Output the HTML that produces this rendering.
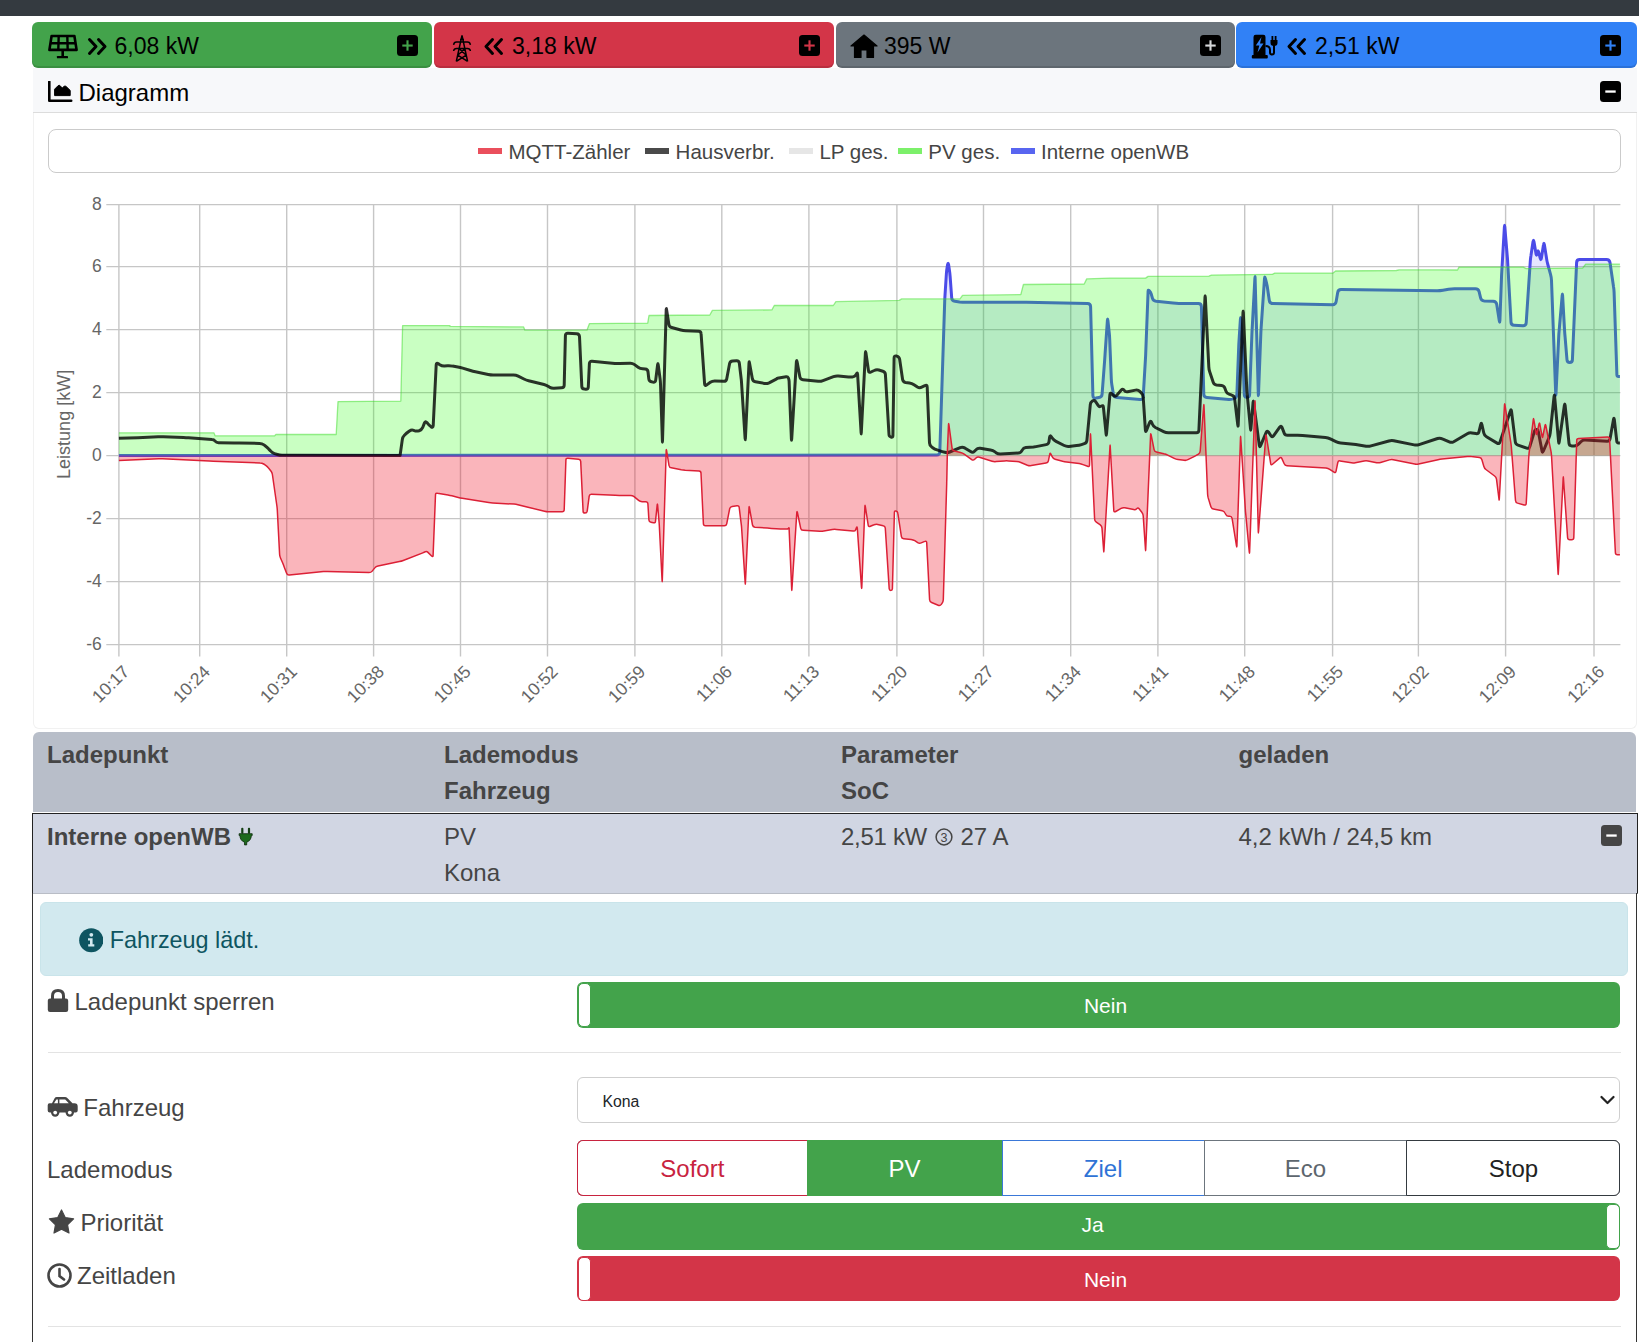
<!DOCTYPE html>
<html><head><meta charset="utf-8"><title>openWB</title>
<style>
html,body{margin:0;padding:0;background:#fff;width:1639px;height:1342px;overflow:hidden;position:relative}
body{font-family:"Liberation Sans", sans-serif}
.t{position:absolute;white-space:nowrap;line-height:1}
.b{position:absolute;display:block}
</style></head><body>
<div class="b" style="left:0.00px;top:0.00px;width:1639.00px;height:15.60px;background:#343a40"></div>
<div class="b" style="left:32.00px;top:22.00px;width:400.40px;height:45.50px;background:#43a34b;border-radius:6px;box-shadow:inset 0 -2px 0 rgba(0,0,0,.12)"></div>
<div class="b" style="left:433.60px;top:22.00px;width:400.60px;height:45.50px;background:#d33548;border-radius:6px;box-shadow:inset 0 -2px 0 rgba(0,0,0,.12)"></div>
<div class="b" style="left:835.70px;top:22.00px;width:399.80px;height:45.50px;background:#6c757d;border-radius:6px;box-shadow:inset 0 -2px 0 rgba(0,0,0,.12)"></div>
<div class="b" style="left:1236.10px;top:22.00px;width:400.60px;height:45.50px;background:#3181f6;border-radius:6px;box-shadow:inset 0 -2px 0 rgba(0,0,0,.12)"></div>
<svg class="b" style="left:397.00px;top:34.50px;" width="21" height="21" viewBox="0 0 21 21"><rect x="0" y="0" width="21" height="21" rx="3.5" fill="#000"/><rect x="5.3" y="9.5" width="10.4" height="2.1" fill="#43a34b"/><rect x="9.45" y="5.3" width="2.1" height="10.4" fill="#43a34b"/></svg>
<svg class="b" style="left:798.60px;top:34.50px;" width="21" height="21" viewBox="0 0 21 21"><rect x="0" y="0" width="21" height="21" rx="3.5" fill="#000"/><rect x="5.3" y="9.5" width="10.4" height="2.1" fill="#d33548"/><rect x="9.45" y="5.3" width="2.1" height="10.4" fill="#d33548"/></svg>
<svg class="b" style="left:1199.50px;top:34.50px;" width="21" height="21" viewBox="0 0 21 21"><rect x="0" y="0" width="21" height="21" rx="3.5" fill="#000"/><rect x="5.3" y="9.5" width="10.4" height="2.1" fill="#d6d8da"/><rect x="9.45" y="5.3" width="2.1" height="10.4" fill="#d6d8da"/></svg>
<svg class="b" style="left:1600.40px;top:34.50px;" width="21" height="21" viewBox="0 0 21 21"><rect x="0" y="0" width="21" height="21" rx="3.5" fill="#000"/><rect x="5.3" y="9.5" width="10.4" height="2.1" fill="#3181f6"/><rect x="9.45" y="5.3" width="2.1" height="10.4" fill="#3181f6"/></svg>
<svg class="b" style="left:48.00px;top:33.50px;" width="30" height="25" viewBox="0 0 30 25"><path d="M3.6 2.0 H26.4 L28.6 15.9 H1.4 Z" fill="none" stroke="#000" stroke-width="2.6" stroke-linejoin="round"/><path d="M2.3 9.2 H27.7 M10.7 2 L10.3 15.9 M19.3 2 L19.7 15.9" stroke="#000" stroke-width="2.4"/><rect x="13.4" y="16" width="2.6" height="6" fill="#000"/><rect x="8.9" y="22" width="11.1" height="2.3" rx="0.6" fill="#000"/></svg>
<svg class="b" style="left:86.50px;top:37.00px;" width="21" height="19" viewBox="0 0 21 19"><path d="M2.5 2.5 L9 9.5 L2.5 16.5 M11.5 2.5 L18 9.5 L11.5 16.5" fill="none" stroke="#000" stroke-width="3" stroke-linecap="round" stroke-linejoin="round"/></svg>
<div class="t" style="left:114.5px;top:35.33px;font-size:23px;color:#000;font-weight:normal;">6,08 kW</div>
<svg class="b" style="left:452.00px;top:34.00px;" width="20" height="28" viewBox="0 0 20 28"><path d="M10 1.3 L4.3 27.3 M10 1.3 L15.6 27.3 M1.6 10.8 Q2 8.1 4.5 8.1 H15.5 Q18 8.1 18.4 10.8 M1.6 17 Q2 14.5 4.5 14.5 H15.5 Q18 14.5 18.4 17 M8 5.5 H12 M7 14.5 L14.3 21.2 M13 14.5 L5.7 21.2 M5.7 21.2 L15.6 27.3 M14.3 21.2 L4.3 27.3" fill="none" stroke="#000" stroke-width="1.5"/></svg>
<svg class="b" style="left:482.50px;top:37.00px;" width="21" height="19" viewBox="0 0 21 19"><path d="M18.5 2.5 L12 9.5 L18.5 16.5 M9.5 2.5 L3 9.5 L9.5 16.5" fill="none" stroke="#000" stroke-width="3" stroke-linecap="round" stroke-linejoin="round"/></svg>
<div class="t" style="left:512.0px;top:35.33px;font-size:23px;color:#000;font-weight:normal;">3,18 kW</div>
<svg class="b" style="left:850.00px;top:34.00px;" width="28" height="24" viewBox="0 0 28 24"><path d="M14 1 L27 12 L23.5 12 L23.5 23.5 L17 23.5 L17 16 L11 16 L11 23.5 L4.5 23.5 L4.5 12 L1 12 Z" fill="#000" stroke="#000" stroke-width="1.2" stroke-linejoin="round"/></svg>
<div class="t" style="left:884.0px;top:35.33px;font-size:23px;color:#000;font-weight:normal;">395 W</div>
<svg class="b" style="left:1251.00px;top:33.50px;" width="28" height="25" viewBox="0 0 28 25"><path d="M2.5 3 Q2.5 0.8 4.7 0.8 H12.3 Q14.5 0.8 14.5 3 V21.5 H2.5 Z" fill="#000"/><rect x="0.8" y="21" width="16" height="3.6" rx="1" fill="#000"/><path d="M10.5 3 L4.8 11.5 H8.3 L6.5 18.5 L12.5 9.5 H9 Z" fill="#3181f6"/><path d="M14.5 12 Q19 12 19 16 V18.5 Q19 20.5 21 20.5 Q23 20.5 23 18.5 V11" fill="none" stroke="#000" stroke-width="2"/><path d="M19.5 6 H26.5 V9 Q26.5 12 23 12 Q19.5 12 19.5 9 Z" fill="#000"/><rect x="20.5" y="2" width="1.8" height="5" fill="#000"/><rect x="23.7" y="2" width="1.8" height="5" fill="#000"/></svg>
<svg class="b" style="left:1286.00px;top:37.00px;" width="21" height="19" viewBox="0 0 21 19"><path d="M18.5 2.5 L12 9.5 L18.5 16.5 M9.5 2.5 L3 9.5 L9.5 16.5" fill="none" stroke="#000" stroke-width="3" stroke-linecap="round" stroke-linejoin="round"/></svg>
<div class="t" style="left:1315.0px;top:35.33px;font-size:23px;color:#000;font-weight:normal;">2,51 kW</div>
<div class="b" style="left:32.50px;top:67.50px;width:1604.00px;height:661.50px;border:1px solid #f1f1f1;border-top:none;border-radius:0 0 6px 6px;background:#fff;box-sizing:border-box"></div>
<div class="b" style="left:32.50px;top:67.50px;width:1604.00px;height:45.50px;background:#f7f8fa;border-bottom:1px solid #dcdcdc;box-sizing:border-box"></div>
<svg class="b" style="left:47.50px;top:81.00px;" width="25" height="22" viewBox="0 0 25 22"><path d="M1.3 0.8 V19.7 H23.2" fill="none" stroke="#000" stroke-width="2.6" stroke-linecap="round" stroke-linejoin="round"/><path d="M6.6 14.6 V8.2 L10.2 4.6 Q11.2 3.8 12.2 4.8 L14.2 7.0 L16.2 5.3 Q17.2 4.6 18.2 5.6 L22.2 9.4 V14.6 Z" fill="#000" stroke="#000" stroke-width="1" stroke-linejoin="round"/></svg>
<div class="t" style="left:78.5px;top:80.98px;font-size:24px;color:#000;font-weight:normal;">Diagramm</div>
<svg class="b" style="left:1600.40px;top:80.50px;" width="21" height="21" viewBox="0 0 21 21"><rect x="0" y="0" width="21" height="21" rx="3.5" fill="#000"/><rect x="5.3" y="9.4" width="10.4" height="2.3" fill="#fff"/></svg>
<div class="b" style="left:48.00px;top:129.30px;width:1572.50px;height:44.20px;border:1px solid #cbcbcb;border-radius:8px;box-sizing:border-box"></div>
<div class="b" style="left:478.00px;top:148.00px;width:24.00px;height:6.00px;background:#ea4f5c"></div>
<div class="t" style="left:508.5px;top:142.45px;font-size:20.5px;color:#454545;font-weight:normal;">MQTT-Zähler</div>
<div class="b" style="left:645.20px;top:148.00px;width:24.00px;height:6.00px;background:#4a4a4a"></div>
<div class="t" style="left:675.6px;top:142.45px;font-size:20.5px;color:#454545;font-weight:normal;">Hausverbr.</div>
<div class="b" style="left:789.00px;top:148.00px;width:24.00px;height:6.00px;background:#e6e6e6"></div>
<div class="t" style="left:819.4px;top:142.45px;font-size:20.5px;color:#454545;font-weight:normal;">LP ges.</div>
<div class="b" style="left:897.90px;top:148.00px;width:24.00px;height:6.00px;background:#7cf06a"></div>
<div class="t" style="left:928.3px;top:142.45px;font-size:20.5px;color:#454545;font-weight:normal;">PV ges.</div>
<div class="b" style="left:1011.00px;top:148.00px;width:24.00px;height:6.00px;background:#5865f0"></div>
<div class="t" style="left:1041.0px;top:142.45px;font-size:20.5px;color:#454545;font-weight:normal;">Interne openWB</div>
<svg class="b" style="left:0;top:180px" width="1639" height="550" viewBox="0 180 1639 550">
<line x1="106.3" y1="204.60" x2="1620.4" y2="204.60" stroke="#c6c6c6" stroke-width="1.4"/>
<line x1="106.3" y1="266.60" x2="1620.4" y2="266.60" stroke="#c6c6c6" stroke-width="1.4"/>
<line x1="106.3" y1="329.60" x2="1620.4" y2="329.60" stroke="#c6c6c6" stroke-width="1.4"/>
<line x1="106.3" y1="392.60" x2="1620.4" y2="392.60" stroke="#c6c6c6" stroke-width="1.4"/>
<line x1="106.3" y1="455.60" x2="1620.4" y2="455.60" stroke="#c6c6c6" stroke-width="1.4"/>
<line x1="106.3" y1="518.60" x2="1620.4" y2="518.60" stroke="#c6c6c6" stroke-width="1.4"/>
<line x1="106.3" y1="581.60" x2="1620.4" y2="581.60" stroke="#c6c6c6" stroke-width="1.4"/>
<line x1="106.3" y1="644.60" x2="1620.4" y2="644.60" stroke="#c6c6c6" stroke-width="1.4"/>
<line x1="118.90" y1="204.7" x2="118.90" y2="656.5" stroke="#c6c6c6" stroke-width="1.4"/>
<line x1="199.70" y1="204.7" x2="199.70" y2="656.5" stroke="#c6c6c6" stroke-width="1.4"/>
<line x1="286.70" y1="204.7" x2="286.70" y2="656.5" stroke="#c6c6c6" stroke-width="1.4"/>
<line x1="373.60" y1="204.7" x2="373.60" y2="656.5" stroke="#c6c6c6" stroke-width="1.4"/>
<line x1="460.50" y1="204.7" x2="460.50" y2="656.5" stroke="#c6c6c6" stroke-width="1.4"/>
<line x1="547.50" y1="204.7" x2="547.50" y2="656.5" stroke="#c6c6c6" stroke-width="1.4"/>
<line x1="634.90" y1="204.7" x2="634.90" y2="656.5" stroke="#c6c6c6" stroke-width="1.4"/>
<line x1="721.80" y1="204.7" x2="721.80" y2="656.5" stroke="#c6c6c6" stroke-width="1.4"/>
<line x1="808.90" y1="204.7" x2="808.90" y2="656.5" stroke="#c6c6c6" stroke-width="1.4"/>
<line x1="896.90" y1="204.7" x2="896.90" y2="656.5" stroke="#c6c6c6" stroke-width="1.4"/>
<line x1="983.50" y1="204.7" x2="983.50" y2="656.5" stroke="#c6c6c6" stroke-width="1.4"/>
<line x1="1070.70" y1="204.7" x2="1070.70" y2="656.5" stroke="#c6c6c6" stroke-width="1.4"/>
<line x1="1157.90" y1="204.7" x2="1157.90" y2="656.5" stroke="#c6c6c6" stroke-width="1.4"/>
<line x1="1244.70" y1="204.7" x2="1244.70" y2="656.5" stroke="#c6c6c6" stroke-width="1.4"/>
<line x1="1332.60" y1="204.7" x2="1332.60" y2="656.5" stroke="#c6c6c6" stroke-width="1.4"/>
<line x1="1418.40" y1="204.7" x2="1418.40" y2="656.5" stroke="#c6c6c6" stroke-width="1.4"/>
<line x1="1505.60" y1="204.7" x2="1505.60" y2="656.5" stroke="#c6c6c6" stroke-width="1.4"/>
<line x1="1594.00" y1="204.7" x2="1594.00" y2="656.5" stroke="#c6c6c6" stroke-width="1.4"/>
<text x="101.8" y="210.10" text-anchor="end" font-size="17.5" fill="#666" font-family="Liberation Sans">8</text>
<text x="101.8" y="272.10" text-anchor="end" font-size="17.5" fill="#666" font-family="Liberation Sans">6</text>
<text x="101.8" y="335.10" text-anchor="end" font-size="17.5" fill="#666" font-family="Liberation Sans">4</text>
<text x="101.8" y="398.10" text-anchor="end" font-size="17.5" fill="#666" font-family="Liberation Sans">2</text>
<text x="101.8" y="461.10" text-anchor="end" font-size="17.5" fill="#666" font-family="Liberation Sans">0</text>
<text x="101.8" y="524.10" text-anchor="end" font-size="17.5" fill="#666" font-family="Liberation Sans">-2</text>
<text x="101.8" y="587.10" text-anchor="end" font-size="17.5" fill="#666" font-family="Liberation Sans">-4</text>
<text x="101.8" y="650.10" text-anchor="end" font-size="17.5" fill="#666" font-family="Liberation Sans">-6</text>
<text x="126.10" y="674.50" text-anchor="end" font-size="17.5" fill="#666" font-family="Liberation Sans" transform="rotate(-45 126.10 668.50)">10:17</text>
<text x="206.90" y="674.50" text-anchor="end" font-size="17.5" fill="#666" font-family="Liberation Sans" transform="rotate(-45 206.90 668.50)">10:24</text>
<text x="293.90" y="674.50" text-anchor="end" font-size="17.5" fill="#666" font-family="Liberation Sans" transform="rotate(-45 293.90 668.50)">10:31</text>
<text x="380.80" y="674.50" text-anchor="end" font-size="17.5" fill="#666" font-family="Liberation Sans" transform="rotate(-45 380.80 668.50)">10:38</text>
<text x="467.70" y="674.50" text-anchor="end" font-size="17.5" fill="#666" font-family="Liberation Sans" transform="rotate(-45 467.70 668.50)">10:45</text>
<text x="554.70" y="674.50" text-anchor="end" font-size="17.5" fill="#666" font-family="Liberation Sans" transform="rotate(-45 554.70 668.50)">10:52</text>
<text x="642.10" y="674.50" text-anchor="end" font-size="17.5" fill="#666" font-family="Liberation Sans" transform="rotate(-45 642.10 668.50)">10:59</text>
<text x="729.00" y="674.50" text-anchor="end" font-size="17.5" fill="#666" font-family="Liberation Sans" transform="rotate(-45 729.00 668.50)">11:06</text>
<text x="816.10" y="674.50" text-anchor="end" font-size="17.5" fill="#666" font-family="Liberation Sans" transform="rotate(-45 816.10 668.50)">11:13</text>
<text x="904.10" y="674.50" text-anchor="end" font-size="17.5" fill="#666" font-family="Liberation Sans" transform="rotate(-45 904.10 668.50)">11:20</text>
<text x="990.70" y="674.50" text-anchor="end" font-size="17.5" fill="#666" font-family="Liberation Sans" transform="rotate(-45 990.70 668.50)">11:27</text>
<text x="1077.90" y="674.50" text-anchor="end" font-size="17.5" fill="#666" font-family="Liberation Sans" transform="rotate(-45 1077.90 668.50)">11:34</text>
<text x="1165.10" y="674.50" text-anchor="end" font-size="17.5" fill="#666" font-family="Liberation Sans" transform="rotate(-45 1165.10 668.50)">11:41</text>
<text x="1251.90" y="674.50" text-anchor="end" font-size="17.5" fill="#666" font-family="Liberation Sans" transform="rotate(-45 1251.90 668.50)">11:48</text>
<text x="1339.80" y="674.50" text-anchor="end" font-size="17.5" fill="#666" font-family="Liberation Sans" transform="rotate(-45 1339.80 668.50)">11:55</text>
<text x="1425.60" y="674.50" text-anchor="end" font-size="17.5" fill="#666" font-family="Liberation Sans" transform="rotate(-45 1425.60 668.50)">12:02</text>
<text x="1512.80" y="674.50" text-anchor="end" font-size="17.5" fill="#666" font-family="Liberation Sans" transform="rotate(-45 1512.80 668.50)">12:09</text>
<text x="1601.20" y="674.50" text-anchor="end" font-size="17.5" fill="#666" font-family="Liberation Sans" transform="rotate(-45 1601.20 668.50)">12:16</text>
<text x="0" y="0" text-anchor="middle" font-size="18" fill="#666" font-family="Liberation Sans" transform="translate(70.2 424.4) rotate(-90)">Leistung [kW]</text>
<path d="M118.9 455.6 L936.7 455.0 Q939.7 455.0 939.8 452.0 L944.7 301.4 Q944.8 298.4 945.0 295.4 L946.4 273.5 Q946.6 270.5 947.1 267.6 L947.6 264.6 Q948.1 261.7 948.6 264.6 L949.4 270.1 Q949.9 273.1 950.1 276.1 L951.7 297.9 Q951.9 300.9 954.9 301.3 L959.6 301.9 Q962.5 302.2 965.5 302.2 L1020.4 302.2 Q1023.4 302.2 1026.4 302.3 L1087.5 303.4 Q1090.5 303.5 1090.6 306.5 L1092.9 395.5 Q1093.0 398.5 1096.0 398.1 L1098.9 397.6 Q1101.9 397.2 1102.1 394.2 L1104.7 359.7 Q1104.9 356.7 1105.1 353.7 L1107.4 320.4 Q1107.6 317.4 1107.9 320.4 L1109.3 333.4 Q1109.6 336.4 1109.7 339.4 L1111.3 379.0 Q1111.4 382.0 1111.9 385.0 L1113.4 394.3 Q1113.9 397.2 1116.9 397.5 L1140.1 399.5 Q1143.1 399.7 1143.2 396.8 L1145.4 359.7 Q1145.6 356.7 1145.7 353.7 L1148.1 291.3 Q1148.1 289.5 1149.4 290.8 L1149.4 290.8 Q1150.7 292.1 1151.2 293.8 L1152.4 298.1 Q1153.2 300.9 1156.2 301.3 L1173.0 303.1 Q1176.0 303.5 1179.0 303.5 L1198.3 303.5 Q1201.3 303.5 1201.4 306.5 L1203.8 394.2 Q1203.9 397.2 1206.9 397.5 L1228.9 399.5 Q1231.7 399.7 1234.3 398.5 L1234.3 398.5 Q1236.8 397.2 1236.9 394.4 L1238.7 347.0 Q1238.8 344.0 1239.0 341.0 L1240.4 319.1 Q1240.6 316.1 1240.8 319.1 L1242.2 341.0 Q1242.4 344.0 1242.5 347.0 L1244.3 394.7 Q1244.4 397.2 1246.9 397.2 L1246.9 397.2 Q1249.5 397.2 1249.6 394.7 L1251.9 334.3 Q1252.0 331.3 1252.2 328.3 L1254.9 278.1 Q1255.1 275.1 1255.1 278.1 L1256.5 328.3 Q1256.6 331.3 1256.7 334.3 L1258.3 394.2 Q1258.3 397.2 1258.5 394.2 L1260.8 334.3 Q1260.9 331.3 1261.1 328.3 L1264.5 278.6 Q1264.7 275.6 1265.4 278.5 L1266.5 282.8 Q1267.2 285.7 1267.6 288.7 L1269.3 300.5 Q1269.7 303.5 1272.7 303.5 L1332.6 304.7 Q1335.6 304.7 1336.1 301.8 L1337.7 292.5 Q1338.2 289.5 1341.2 289.6 L1437.0 290.8 Q1440.0 290.8 1443.0 290.3 L1448.6 289.3 Q1451.5 288.8 1454.5 288.8 L1475.4 288.8 Q1478.4 288.8 1479.1 291.7 L1480.6 297.8 Q1481.3 300.7 1484.3 300.9 L1493.2 301.2 Q1496.2 301.3 1496.7 304.3 L1499.3 320.7 Q1499.8 323.7 1499.9 320.7 L1501.5 277.5 Q1501.6 274.5 1501.8 271.5 L1504.4 226.8 Q1504.6 223.8 1504.8 226.8 L1507.3 256.6 Q1507.6 259.6 1507.7 262.6 L1511.0 322.2 Q1511.1 325.2 1514.1 325.3 L1523.1 325.7 Q1526.1 325.8 1526.2 322.8 L1530.3 261.1 Q1530.5 258.1 1531.0 255.2 L1533.0 241.7 Q1533.5 238.7 1534.0 241.7 L1536.0 253.7 Q1536.5 256.6 1537.1 253.7 L1537.4 252.1 Q1538.0 249.2 1538.7 252.1 L1540.2 258.2 Q1541.0 261.1 1541.4 258.1 L1543.5 244.7 Q1543.9 241.7 1544.4 244.7 L1546.5 258.1 Q1546.9 261.1 1547.7 264.0 L1550.6 274.6 Q1551.4 277.5 1551.5 280.5 L1555.7 393.7 Q1555.9 396.7 1556.0 393.7 L1558.7 337.1 Q1558.8 334.1 1559.1 331.1 L1562.2 295.4 Q1562.4 292.4 1562.6 295.4 L1564.6 331.1 Q1564.8 334.1 1565.1 337.1 L1567.0 359.9 Q1567.2 362.4 1569.7 362.4 L1569.7 362.4 Q1572.3 362.4 1572.4 359.9 L1576.6 262.6 Q1576.7 259.6 1579.7 259.6 L1606.5 259.6 Q1609.5 259.6 1610.0 262.6 L1613.5 286.5 Q1614.0 289.4 1614.1 292.4 L1616.9 375.0 Q1617.0 376.5 1618.5 376.5 L1619.9 376.5 L1619.9 455.6 L118.9 455.6 Z" fill="rgba(40,40,255,0.12)"/>
<path d="M118.9 455.6 L936.7 455.0 Q939.7 455.0 939.8 452.0 L944.7 301.4 Q944.8 298.4 945.0 295.4 L946.4 273.5 Q946.6 270.5 947.1 267.6 L947.6 264.6 Q948.1 261.7 948.6 264.6 L949.4 270.1 Q949.9 273.1 950.1 276.1 L951.7 297.9 Q951.9 300.9 954.9 301.3 L959.6 301.9 Q962.5 302.2 965.5 302.2 L1020.4 302.2 Q1023.4 302.2 1026.4 302.3 L1087.5 303.4 Q1090.5 303.5 1090.6 306.5 L1092.9 395.5 Q1093.0 398.5 1096.0 398.1 L1098.9 397.6 Q1101.9 397.2 1102.1 394.2 L1104.7 359.7 Q1104.9 356.7 1105.1 353.7 L1107.4 320.4 Q1107.6 317.4 1107.9 320.4 L1109.3 333.4 Q1109.6 336.4 1109.7 339.4 L1111.3 379.0 Q1111.4 382.0 1111.9 385.0 L1113.4 394.3 Q1113.9 397.2 1116.9 397.5 L1140.1 399.5 Q1143.1 399.7 1143.2 396.8 L1145.4 359.7 Q1145.6 356.7 1145.7 353.7 L1148.1 291.3 Q1148.1 289.5 1149.4 290.8 L1149.4 290.8 Q1150.7 292.1 1151.2 293.8 L1152.4 298.1 Q1153.2 300.9 1156.2 301.3 L1173.0 303.1 Q1176.0 303.5 1179.0 303.5 L1198.3 303.5 Q1201.3 303.5 1201.4 306.5 L1203.8 394.2 Q1203.9 397.2 1206.9 397.5 L1228.9 399.5 Q1231.7 399.7 1234.3 398.5 L1234.3 398.5 Q1236.8 397.2 1236.9 394.4 L1238.7 347.0 Q1238.8 344.0 1239.0 341.0 L1240.4 319.1 Q1240.6 316.1 1240.8 319.1 L1242.2 341.0 Q1242.4 344.0 1242.5 347.0 L1244.3 394.7 Q1244.4 397.2 1246.9 397.2 L1246.9 397.2 Q1249.5 397.2 1249.6 394.7 L1251.9 334.3 Q1252.0 331.3 1252.2 328.3 L1254.9 278.1 Q1255.1 275.1 1255.1 278.1 L1256.5 328.3 Q1256.6 331.3 1256.7 334.3 L1258.3 394.2 Q1258.3 397.2 1258.5 394.2 L1260.8 334.3 Q1260.9 331.3 1261.1 328.3 L1264.5 278.6 Q1264.7 275.6 1265.4 278.5 L1266.5 282.8 Q1267.2 285.7 1267.6 288.7 L1269.3 300.5 Q1269.7 303.5 1272.7 303.5 L1332.6 304.7 Q1335.6 304.7 1336.1 301.8 L1337.7 292.5 Q1338.2 289.5 1341.2 289.6 L1437.0 290.8 Q1440.0 290.8 1443.0 290.3 L1448.6 289.3 Q1451.5 288.8 1454.5 288.8 L1475.4 288.8 Q1478.4 288.8 1479.1 291.7 L1480.6 297.8 Q1481.3 300.7 1484.3 300.9 L1493.2 301.2 Q1496.2 301.3 1496.7 304.3 L1499.3 320.7 Q1499.8 323.7 1499.9 320.7 L1501.5 277.5 Q1501.6 274.5 1501.8 271.5 L1504.4 226.8 Q1504.6 223.8 1504.8 226.8 L1507.3 256.6 Q1507.6 259.6 1507.7 262.6 L1511.0 322.2 Q1511.1 325.2 1514.1 325.3 L1523.1 325.7 Q1526.1 325.8 1526.2 322.8 L1530.3 261.1 Q1530.5 258.1 1531.0 255.2 L1533.0 241.7 Q1533.5 238.7 1534.0 241.7 L1536.0 253.7 Q1536.5 256.6 1537.1 253.7 L1537.4 252.1 Q1538.0 249.2 1538.7 252.1 L1540.2 258.2 Q1541.0 261.1 1541.4 258.1 L1543.5 244.7 Q1543.9 241.7 1544.4 244.7 L1546.5 258.1 Q1546.9 261.1 1547.7 264.0 L1550.6 274.6 Q1551.4 277.5 1551.5 280.5 L1555.7 393.7 Q1555.9 396.7 1556.0 393.7 L1558.7 337.1 Q1558.8 334.1 1559.1 331.1 L1562.2 295.4 Q1562.4 292.4 1562.6 295.4 L1564.6 331.1 Q1564.8 334.1 1565.1 337.1 L1567.0 359.9 Q1567.2 362.4 1569.7 362.4 L1569.7 362.4 Q1572.3 362.4 1572.4 359.9 L1576.6 262.6 Q1576.7 259.6 1579.7 259.6 L1606.5 259.6 Q1609.5 259.6 1610.0 262.6 L1613.5 286.5 Q1614.0 289.4 1614.1 292.4 L1616.9 375.0 Q1617.0 376.5 1618.5 376.5 L1619.9 376.5" fill="none" stroke="#4b4be8" stroke-width="3" stroke-linejoin="round"/>
<path d="M118.9 432.8 L118.9 432.8 L213.9 432.8 L215.1 435.8 L274.7 435.8 L275.9 434.5 L336.2 434.5 L338.0 401.6 L400.8 401.1 L402.6 325.6 L450.0 325.6 L450.1 326.4 L523.6 326.9 L524.9 330.2 L586.9 330.2 L589.5 323.6 L647.7 323.1 L649.0 315.5 L709.8 315.0 L712.4 310.4 L771.9 309.9 L774.4 305.3 L777.6 305.5 L833.3 305.5 L835.9 301.7 L899.2 300.4 L901.7 298.9 L960.0 298.9 L962.5 295.4 L1020.8 294.6 L1023.4 284.5 L1084.2 284.0 L1086.7 278.9 L1110.0 278.1 L1115.2 278.1 L1145.6 278.1 L1148.1 276.4 L1208.9 276.1 L1211.5 275.1 L1272.3 274.3 L1274.8 273.1 L1333.1 273.1 L1335.6 271.0 L1396.4 270.5 L1399.0 269.8 L1440.0 269.8 L1457.5 270.0 L1459.0 267.1 L1523.1 267.1 L1526.1 268.6 L1582.7 268.0 L1585.7 264.1 L1619.9 264.1 L1619.9 455.6 L118.9 455.6 Z" fill="rgba(30,255,0,0.24)"/>
<path d="M118.9 432.8 L118.9 432.8 L213.9 432.8 L215.1 435.8 L274.7 435.8 L275.9 434.5 L336.2 434.5 L338.0 401.6 L400.8 401.1 L402.6 325.6 L450.0 325.6 L450.1 326.4 L523.6 326.9 L524.9 330.2 L586.9 330.2 L589.5 323.6 L647.7 323.1 L649.0 315.5 L709.8 315.0 L712.4 310.4 L771.9 309.9 L774.4 305.3 L777.6 305.5 L833.3 305.5 L835.9 301.7 L899.2 300.4 L901.7 298.9 L960.0 298.9 L962.5 295.4 L1020.8 294.6 L1023.4 284.5 L1084.2 284.0 L1086.7 278.9 L1110.0 278.1 L1115.2 278.1 L1145.6 278.1 L1148.1 276.4 L1208.9 276.1 L1211.5 275.1 L1272.3 274.3 L1274.8 273.1 L1333.1 273.1 L1335.6 271.0 L1396.4 270.5 L1399.0 269.8 L1440.0 269.8 L1457.5 270.0 L1459.0 267.1 L1523.1 267.1 L1526.1 268.6 L1582.7 268.0 L1585.7 264.1 L1619.9 264.1" fill="none" stroke="rgba(60,220,40,0.5)" stroke-width="1.3" stroke-linejoin="round"/>
<path d="M118.9 438.3 L118.9 438.3 Q118.9 438.3 118.9 438.3 L137.9 437.7 Q140.4 437.6 142.9 437.5 L158.2 436.7 Q160.7 436.6 163.2 436.7 L183.5 437.5 Q186.0 437.6 188.5 437.8 L211.9 439.5 Q213.9 439.6 215.1 441.1 L215.1 441.1 Q216.4 442.7 218.4 442.7 L234.2 442.9 Q236.7 442.9 239.2 443.0 L259.5 443.4 Q262.0 443.4 264.0 444.9 L265.1 445.7 Q267.1 447.2 268.8 449.1 L270.5 450.9 Q272.1 452.8 274.5 453.6 L277.4 454.5 Q279.7 455.3 282.2 455.3 L399.9 455.6 Q400.0 455.6 400.0 455.5 L400.0 455.5 Q400.1 455.3 400.1 455.2 L402.3 439.6 Q402.6 437.1 404.4 435.3 L404.7 435.0 Q406.4 433.3 408.4 431.8 L409.5 431.0 Q411.5 429.5 413.8 430.4 L414.2 430.6 Q416.6 431.5 419.0 430.8 L419.2 430.7 Q421.6 430.0 422.6 427.7 L424.5 422.9 Q425.4 420.6 426.9 422.6 L427.2 422.9 Q428.7 424.9 430.7 426.4 L431.0 426.7 Q433.0 428.2 433.2 425.7 L436.2 364.8 Q436.3 362.3 438.4 363.7 L439.8 364.7 Q441.9 366.1 444.4 366.0 L447.5 365.8 Q450.0 365.6 452.5 366.1 L457.8 367.0 Q460.3 367.4 462.7 368.1 L470.5 370.5 Q472.9 371.2 475.4 371.7 L488.2 374.5 Q490.7 375.0 493.2 375.0 L513.5 375.0 Q516.0 375.0 518.2 376.1 L523.9 379.0 Q526.1 380.1 528.6 380.7 L544.0 384.5 Q546.4 385.1 548.5 386.5 L549.4 387.1 Q551.5 388.4 554.0 388.3 L561.6 387.8 Q564.1 387.7 564.2 385.2 L565.4 335.7 Q565.4 333.2 567.9 333.3 L576.8 333.8 Q579.3 334.0 579.5 336.5 L581.8 386.4 Q581.9 388.9 584.4 389.1 L585.7 389.2 Q588.2 389.4 588.3 387.0 L589.4 363.6 Q589.5 361.1 592.0 361.3 L599.7 362.1 Q602.1 362.3 604.6 362.5 L614.9 363.4 Q617.3 363.6 619.8 363.5 L630.0 363.2 Q632.5 363.1 634.6 364.6 L638.1 367.2 Q640.1 368.7 642.6 368.8 L645.3 369.0 Q647.7 369.2 648.0 371.7 L648.8 378.9 Q649.0 381.3 651.5 381.8 L652.9 382.1 Q655.4 382.6 655.7 380.1 L657.6 364.8 Q657.9 362.3 658.2 364.8 L660.1 378.9 Q660.4 381.3 660.5 383.8 L662.4 440.9 Q662.4 443.4 662.5 440.9 L666.2 309.9 Q666.2 307.4 666.6 309.8 L668.9 324.4 Q669.3 326.9 671.7 327.5 L680.8 330.0 Q683.2 330.7 685.7 330.8 L698.5 331.3 Q701.0 331.4 701.1 333.9 L704.6 383.9 Q704.8 386.4 706.8 384.9 L710.3 382.3 Q712.4 380.8 714.9 380.9 L723.8 381.3 Q726.3 381.3 726.7 378.9 L729.6 363.5 Q730.1 361.1 732.6 360.9 L736.5 360.7 Q739.0 360.6 739.3 363.0 L741.2 378.9 Q741.5 381.3 741.6 383.8 L745.1 438.4 Q745.3 440.9 745.4 438.4 L749.0 363.1 Q749.1 360.6 749.5 363.0 L752.4 378.9 Q752.9 381.3 755.4 381.8 L764.4 383.4 Q766.8 383.9 769.1 382.8 L776.7 378.9 Q777.0 378.8 777.0 378.5 L777.0 378.5 Q777.0 378.2 777.3 378.2 L786.1 376.7 Q787.7 376.4 788.4 378.0 L788.4 378.0 Q789.0 379.5 789.1 381.1 L791.4 439.1 Q791.5 441.5 791.7 439.1 L796.4 361.7 Q796.6 359.2 797.1 361.7 L799.9 377.0 Q800.4 379.5 802.9 379.7 L818.2 381.3 Q820.7 381.5 823.0 380.6 L833.5 376.6 Q835.9 375.7 838.4 376.0 L843.5 376.6 Q846.0 376.9 848.5 376.9 L852.4 376.9 Q854.9 376.9 856.0 374.7 L856.3 374.1 Q857.4 371.9 857.6 374.4 L861.1 432.7 Q861.2 435.2 861.3 432.7 L865.4 352.8 Q865.5 350.3 865.9 352.8 L868.5 370.7 Q868.8 373.1 871.0 372.0 L874.2 370.5 Q876.4 369.3 878.8 370.0 L882.9 371.2 Q885.3 371.9 885.4 374.4 L889.0 434.5 Q889.1 436.5 891.0 437.1 L891.0 437.1 Q892.9 437.7 892.9 435.7 L894.1 357.9 Q894.1 355.4 896.6 356.0 L896.8 356.1 Q899.2 356.7 899.6 359.1 L902.6 379.5 Q903.0 382.0 905.5 382.4 L909.4 382.9 Q911.9 383.3 914.0 384.7 L917.4 387.0 Q919.5 388.3 921.7 387.2 L924.8 385.7 Q927.1 384.5 927.2 387.0 L929.5 442.9 Q929.6 445.4 931.6 446.9 L932.7 447.7 Q934.7 449.2 937.1 449.9 L939.9 450.9 Q942.3 451.7 944.7 452.3 L944.9 452.3 Q947.3 453.0 949.7 452.0 L960.2 447.6 Q962.5 446.6 964.7 447.9 L970.6 451.6 Q972.7 453.0 974.5 451.2 L976.0 449.7 Q977.7 447.9 980.2 448.3 L990.5 450.0 Q993.0 450.4 995.0 451.9 L996.0 452.7 Q998.0 454.2 1000.5 454.1 L1018.3 453.1 Q1020.8 453.0 1021.9 450.7 L1022.2 450.1 Q1023.4 447.9 1025.8 447.6 L1033.5 446.9 Q1036.0 446.6 1038.5 446.1 L1046.2 444.6 Q1048.7 444.1 1049.0 441.6 L1049.6 437.2 Q1050.0 434.7 1051.4 436.8 L1052.3 438.2 Q1053.8 440.3 1056.0 441.4 L1064.2 445.5 Q1066.4 446.6 1068.9 446.4 L1076.6 445.6 Q1079.1 445.4 1081.5 444.6 L1084.3 443.6 Q1086.7 442.8 1086.9 440.3 L1090.3 404.6 Q1090.5 402.3 1092.4 401.0 L1092.4 401.0 Q1094.3 399.7 1095.6 401.6 L1098.1 405.4 Q1099.4 407.3 1101.3 406.1 L1101.3 406.1 Q1103.2 404.8 1103.4 407.1 L1106.1 434.0 Q1106.3 436.5 1106.5 434.0 L1109.9 394.6 Q1110.1 392.1 1111.9 393.9 L1113.4 395.4 Q1115.2 397.2 1116.8 395.3 L1121.3 390.1 Q1122.8 388.3 1124.1 390.2 L1124.1 390.2 Q1125.3 392.1 1127.6 391.7 L1135.6 390.1 Q1138.0 389.6 1139.8 391.4 L1141.3 392.9 Q1143.1 394.7 1143.2 397.2 L1145.4 430.2 Q1145.6 432.7 1146.5 430.4 L1149.7 422.3 Q1150.7 420.0 1151.6 422.3 L1152.3 424.0 Q1153.2 426.3 1155.4 427.5 L1163.6 431.6 Q1165.9 432.7 1168.4 432.7 L1181.1 432.7 Q1183.6 432.7 1186.1 432.7 L1196.3 432.7 Q1198.8 432.7 1198.9 430.2 L1205.0 297.1 Q1205.1 294.6 1205.3 297.1 L1208.8 366.8 Q1208.9 369.3 1209.7 371.7 L1213.2 382.2 Q1214.0 384.5 1216.5 384.9 L1221.7 385.5 Q1224.1 385.8 1224.9 388.2 L1225.9 391.0 Q1226.7 393.4 1229.0 394.2 L1231.9 395.2 Q1234.3 395.9 1234.6 398.4 L1237.8 425.1 Q1238.1 427.6 1238.2 425.1 L1243.0 312.3 Q1243.1 309.8 1243.3 312.3 L1246.8 389.6 Q1246.9 392.1 1247.2 394.6 L1250.5 428.9 Q1250.7 431.4 1250.9 428.9 L1253.1 402.2 Q1253.3 399.7 1253.6 402.2 L1259.3 445.4 Q1259.6 447.9 1260.6 445.6 L1266.2 432.4 Q1267.2 430.1 1268.6 432.2 L1270.9 435.7 Q1272.3 437.7 1273.7 435.7 L1279.7 427.1 Q1281.1 425.1 1282.0 427.4 L1284.1 432.9 Q1284.9 435.2 1287.4 435.2 L1297.6 435.2 Q1300.1 435.2 1302.6 435.4 L1325.5 437.5 Q1328.0 437.7 1330.3 438.9 L1335.9 441.7 Q1338.2 442.8 1340.6 443.0 L1350.9 443.9 Q1353.4 444.1 1355.8 444.5 L1366.1 446.2 Q1368.6 446.6 1371.0 445.9 L1388.9 441.0 Q1391.4 440.3 1393.8 440.8 L1414.2 444.9 Q1416.7 445.4 1419.1 444.6 L1437.6 438.5 Q1440.0 437.7 1442.3 438.8 L1449.3 441.9 Q1451.5 442.9 1453.7 441.7 L1467.3 433.7 Q1469.4 432.5 1471.9 432.9 L1475.9 433.6 Q1478.4 434.0 1479.0 431.6 L1480.7 424.5 Q1481.3 422.1 1481.9 424.5 L1483.8 433.0 Q1484.3 435.5 1486.5 436.8 L1497.1 443.1 Q1499.2 444.4 1500.0 442.0 L1510.4 411.0 Q1511.1 408.6 1511.5 411.1 L1515.3 441.9 Q1515.6 444.4 1518.0 445.2 L1526.7 448.1 Q1529.0 448.9 1529.8 446.5 L1534.6 430.9 Q1535.0 429.5 1536.5 429.5 L1536.5 429.5 Q1538.0 429.5 1538.2 431.0 L1542.0 450.9 Q1542.4 453.4 1543.4 451.0 L1548.9 437.8 Q1549.9 435.5 1550.2 433.0 L1554.1 396.2 Q1554.4 393.7 1554.6 396.2 L1558.6 441.9 Q1558.8 444.4 1559.2 441.9 L1564.4 405.2 Q1564.8 402.7 1565.1 405.2 L1569.0 443.4 Q1569.3 445.9 1571.8 445.9 L1574.2 445.9 Q1576.7 445.9 1578.5 444.1 L1580.9 441.7 Q1582.7 439.9 1585.2 440.1 L1607.0 441.3 Q1609.5 441.4 1610.0 439.0 L1613.5 419.4 Q1614.0 417.0 1614.3 419.5 L1616.8 441.4 Q1617.0 442.9 1618.5 442.9 L1619.9 442.9" fill="none" stroke="rgba(0,0,0,0.8)" stroke-width="3" stroke-linejoin="round"/>
<path d="M118.9 460.4 L118.9 460.4 Q118.9 460.4 118.9 460.4 L158.7 458.7 Q160.7 458.6 162.7 458.7 L209.3 461.0 Q211.3 461.1 213.3 461.2 L260.0 462.9 Q262.0 462.9 263.7 464.0 L265.4 465.1 Q267.1 466.2 268.3 467.8 L270.9 471.0 Q272.1 472.5 272.4 474.5 L276.9 506.0 Q277.2 508.0 277.3 510.0 L279.6 554.2 Q279.7 556.2 280.5 558.0 L282.8 563.2 Q283.5 565.0 284.2 566.9 L286.6 573.3 Q287.3 575.2 289.3 575.0 L323.4 571.6 Q325.4 571.4 327.3 571.4 L369.0 572.6 Q371.0 572.6 372.2 571.1 L374.8 567.9 Q376.0 566.3 378.0 565.9 L399.4 561.6 Q401.4 561.2 403.2 560.5 L422.8 552.9 Q424.2 552.4 425.4 551.7 L425.4 551.7 Q426.7 551.1 427.7 552.1 L431.6 556.0 Q433.0 557.4 433.1 555.4 L435.5 494.8 Q435.6 492.8 437.5 493.2 L448.0 495.0 Q450.0 495.4 451.9 495.8 L458.3 497.4 Q460.3 497.9 462.2 498.2 L488.7 502.6 Q490.7 503.0 492.7 503.1 L514.0 504.1 Q516.0 504.2 517.9 504.7 L544.5 511.3 Q546.4 511.8 548.4 511.8 L562.1 511.8 Q564.1 511.8 564.2 509.8 L565.9 460.1 Q565.9 458.1 567.9 458.3 L578.6 459.2 Q580.6 459.4 580.7 461.4 L583.1 511.2 Q583.1 513.1 585.0 513.1 L585.0 513.1 Q586.9 513.1 587.2 511.2 L589.2 496.1 Q589.5 494.1 591.5 494.2 L615.3 495.3 Q617.3 495.4 619.3 495.4 L630.5 495.4 Q632.5 495.4 634.1 496.6 L638.6 500.4 Q640.1 501.7 642.1 501.7 L645.7 501.7 Q647.7 501.7 647.9 503.7 L648.9 520.0 Q649.0 522.0 651.0 522.3 L653.4 522.8 Q655.4 523.2 655.5 521.2 L657.2 504.9 Q657.4 503.0 657.6 504.9 L659.0 521.2 Q659.2 523.2 659.3 525.2 L662.1 580.8 Q662.2 582.8 662.3 580.8 L666.2 450.5 Q666.2 448.5 666.6 450.5 L669.0 465.5 Q669.3 467.5 671.3 467.8 L681.3 469.7 Q683.2 470.0 685.2 470.2 L699.0 471.1 Q701.0 471.3 701.0 473.3 L703.4 523.8 Q703.5 525.8 705.5 525.8 L724.3 525.8 Q726.3 525.8 726.7 523.8 L729.7 508.7 Q730.1 506.8 732.1 506.5 L737.0 505.8 Q739.0 505.5 739.2 507.5 L741.2 523.8 Q741.5 525.8 741.6 527.7 L745.2 583.3 Q745.3 585.3 745.4 583.3 L749.0 507.5 Q749.1 505.5 749.4 507.5 L752.5 525.0 Q752.9 527.0 754.9 527.2 L767.4 528.1 Q769.4 528.3 771.4 528.4 L776.3 528.7 Q778.3 528.8 780.3 528.9 L786.4 529.1 Q787.6 529.2 788.4 528.2 L788.4 528.2 Q789.1 527.1 789.1 528.4 L791.7 589.4 Q791.8 591.4 791.9 589.4 L796.8 512.5 Q797.0 510.5 797.4 512.5 L800.7 528.3 Q801.1 530.2 803.1 530.3 L819.9 531.2 Q821.9 531.3 823.8 530.9 L832.3 529.5 Q834.3 529.2 836.3 529.4 L853.1 531.1 Q855.1 531.3 855.8 529.4 L856.4 527.9 Q857.1 526.1 857.3 528.1 L861.5 587.4 Q861.7 589.4 861.8 587.4 L864.9 506.3 Q865.0 504.3 865.3 506.3 L868.2 525.1 Q868.5 527.1 870.4 526.3 L874.0 524.8 Q875.8 524.0 877.7 524.4 L883.2 525.7 Q885.1 526.1 885.3 528.1 L889.2 588.8 Q889.3 590.4 890.8 590.4 L890.8 590.4 Q892.4 590.4 892.4 588.8 L894.4 512.2 Q894.5 510.5 896.0 511.0 L896.0 511.0 Q897.6 511.6 897.8 513.2 L901.4 536.6 Q901.7 538.5 903.7 538.7 L911.1 539.4 Q913.1 539.6 914.8 540.7 L917.7 542.6 Q919.4 543.7 921.2 542.9 L924.8 541.4 Q926.6 540.6 926.7 542.6 L929.6 599.8 Q929.7 601.8 931.6 602.5 L938.2 605.2 Q940.1 606.0 941.3 604.4 L942.0 603.4 Q943.2 601.8 943.3 599.8 L946.7 483.5 Q946.7 481.5 946.8 479.5 L947.3 455.0 Q947.3 453.0 947.4 451.0 L948.5 424.5 Q948.6 422.5 948.9 424.5 L952.1 448.4 Q952.4 450.4 954.4 450.9 L960.6 452.5 Q962.5 453.0 964.2 454.1 L971.7 459.6 Q973.3 460.7 974.7 459.3 L976.0 458.0 Q977.4 456.6 979.4 457.2 L992.1 461.2 Q994.0 461.8 996.0 461.6 L1004.5 460.9 Q1006.5 460.7 1008.5 460.9 L1016.9 461.6 Q1018.9 461.8 1020.8 462.5 L1027.4 465.2 Q1029.3 465.9 1031.3 465.6 L1046.0 463.1 Q1048.0 462.8 1048.4 460.9 L1049.7 454.4 Q1050.0 452.4 1050.9 454.2 L1052.3 456.9 Q1053.2 458.7 1055.1 459.2 L1062.6 461.3 Q1064.6 461.8 1066.6 462.0 L1079.2 463.6 Q1081.2 463.9 1083.0 464.6 L1087.6 466.3 Q1089.5 467.0 1089.5 465.0 L1090.4 434.7 Q1090.5 432.7 1090.6 434.7 L1094.6 518.9 Q1094.6 520.9 1096.3 522.1 L1100.3 524.9 Q1101.9 526.1 1102.0 528.1 L1103.7 551.0 Q1103.8 553.0 1103.9 551.0 L1110.0 446.1 Q1110.1 444.1 1110.2 446.1 L1113.8 510.5 Q1113.9 512.5 1115.7 511.5 L1121.1 508.4 Q1122.8 507.4 1124.8 507.8 L1133.7 509.6 Q1135.5 510.0 1136.7 508.7 L1136.7 508.7 Q1138.0 507.4 1139.1 508.8 L1141.8 512.2 Q1143.1 513.8 1143.2 515.8 L1145.5 549.8 Q1145.6 551.8 1145.7 549.8 L1150.6 434.7 Q1150.7 432.7 1151.1 434.6 L1154.1 449.7 Q1154.5 451.7 1156.4 452.1 L1163.9 453.8 Q1165.9 454.2 1167.7 455.1 L1174.2 458.4 Q1176.0 459.3 1178.0 459.5 L1184.2 460.3 Q1186.1 460.6 1187.9 459.7 L1194.5 456.4 Q1196.3 455.5 1197.9 454.4 L1198.4 454.1 Q1200.1 453.0 1200.2 451.0 L1203.7 405.5 Q1203.9 403.5 1204.0 405.5 L1207.6 494.0 Q1207.7 496.0 1208.2 497.9 L1210.9 506.8 Q1211.5 508.7 1213.4 509.1 L1222.2 510.8 Q1224.1 511.2 1225.0 513.0 L1225.8 514.5 Q1226.7 516.3 1228.7 516.3 L1229.7 516.3 Q1231.7 516.3 1232.1 518.3 L1236.5 546.0 Q1236.8 548.0 1236.9 546.0 L1240.5 437.2 Q1240.6 435.2 1240.7 437.2 L1245.5 511.8 Q1245.7 513.8 1245.9 515.7 L1249.3 552.3 Q1249.5 554.3 1249.6 552.3 L1255.0 401.7 Q1255.1 399.7 1255.1 401.7 L1258.3 532.0 Q1258.3 534.0 1258.5 532.0 L1265.8 435.9 Q1265.9 433.9 1266.3 435.9 L1270.7 463.6 Q1271.0 465.6 1272.5 464.3 L1279.6 458.1 Q1281.1 456.8 1281.9 458.6 L1284.2 463.8 Q1284.9 465.6 1286.9 465.7 L1326.0 468.0 Q1328.0 468.2 1329.7 469.3 L1334.0 472.1 Q1335.6 473.2 1336.0 471.3 L1337.8 462.5 Q1338.2 460.6 1340.1 460.9 L1351.4 462.8 Q1353.4 463.1 1355.3 462.7 L1364.1 460.9 Q1366.0 460.6 1368.0 460.9 L1376.7 462.7 Q1378.7 463.1 1380.6 462.5 L1389.4 459.9 Q1391.4 459.3 1393.3 459.7 L1414.7 464.0 Q1416.7 464.4 1418.6 463.9 L1438.0 459.7 Q1440.0 459.3 1442.0 459.1 L1467.4 456.5 Q1469.4 456.3 1471.4 456.6 L1479.4 457.6 Q1481.3 457.8 1481.9 459.7 L1483.8 466.3 Q1484.3 468.3 1485.9 469.5 L1494.6 476.0 Q1496.2 477.2 1496.5 479.2 L1499.0 499.1 Q1499.2 501.0 1499.3 499.0 L1504.5 404.7 Q1504.6 402.7 1504.9 404.7 L1510.8 442.4 Q1511.1 444.4 1511.3 446.4 L1515.5 500.5 Q1515.6 502.5 1517.5 503.1 L1524.1 505.0 Q1526.1 505.5 1526.2 503.5 L1528.9 455.3 Q1529.0 453.4 1529.3 451.4 L1533.3 419.6 Q1533.5 417.6 1533.8 419.6 L1536.2 433.5 Q1536.5 435.5 1536.9 433.5 L1539.0 424.0 Q1539.5 422.1 1539.8 424.0 L1542.1 436.5 Q1542.4 438.5 1542.8 436.5 L1545.0 425.5 Q1545.4 423.5 1545.8 425.5 L1551.0 451.4 Q1551.4 453.4 1551.5 455.4 L1558.1 573.6 Q1558.2 575.6 1558.3 573.6 L1563.2 477.7 Q1563.3 475.7 1563.4 477.7 L1567.6 537.8 Q1567.8 539.8 1569.8 539.8 L1571.7 539.8 Q1573.7 539.8 1573.8 537.8 L1576.7 440.4 Q1576.7 438.5 1578.7 438.4 L1607.5 437.1 Q1609.5 437.0 1609.6 439.0 L1615.4 552.7 Q1615.5 554.7 1617.5 554.7 L1619.9 554.7 L1619.9 455.6 L118.9 455.6 Z" fill="rgba(240,10,30,0.3)"/>
<path d="M118.9 460.4 L118.9 460.4 Q118.9 460.4 118.9 460.4 L158.7 458.7 Q160.7 458.6 162.7 458.7 L209.3 461.0 Q211.3 461.1 213.3 461.2 L260.0 462.9 Q262.0 462.9 263.7 464.0 L265.4 465.1 Q267.1 466.2 268.3 467.8 L270.9 471.0 Q272.1 472.5 272.4 474.5 L276.9 506.0 Q277.2 508.0 277.3 510.0 L279.6 554.2 Q279.7 556.2 280.5 558.0 L282.8 563.2 Q283.5 565.0 284.2 566.9 L286.6 573.3 Q287.3 575.2 289.3 575.0 L323.4 571.6 Q325.4 571.4 327.3 571.4 L369.0 572.6 Q371.0 572.6 372.2 571.1 L374.8 567.9 Q376.0 566.3 378.0 565.9 L399.4 561.6 Q401.4 561.2 403.2 560.5 L422.8 552.9 Q424.2 552.4 425.4 551.7 L425.4 551.7 Q426.7 551.1 427.7 552.1 L431.6 556.0 Q433.0 557.4 433.1 555.4 L435.5 494.8 Q435.6 492.8 437.5 493.2 L448.0 495.0 Q450.0 495.4 451.9 495.8 L458.3 497.4 Q460.3 497.9 462.2 498.2 L488.7 502.6 Q490.7 503.0 492.7 503.1 L514.0 504.1 Q516.0 504.2 517.9 504.7 L544.5 511.3 Q546.4 511.8 548.4 511.8 L562.1 511.8 Q564.1 511.8 564.2 509.8 L565.9 460.1 Q565.9 458.1 567.9 458.3 L578.6 459.2 Q580.6 459.4 580.7 461.4 L583.1 511.2 Q583.1 513.1 585.0 513.1 L585.0 513.1 Q586.9 513.1 587.2 511.2 L589.2 496.1 Q589.5 494.1 591.5 494.2 L615.3 495.3 Q617.3 495.4 619.3 495.4 L630.5 495.4 Q632.5 495.4 634.1 496.6 L638.6 500.4 Q640.1 501.7 642.1 501.7 L645.7 501.7 Q647.7 501.7 647.9 503.7 L648.9 520.0 Q649.0 522.0 651.0 522.3 L653.4 522.8 Q655.4 523.2 655.5 521.2 L657.2 504.9 Q657.4 503.0 657.6 504.9 L659.0 521.2 Q659.2 523.2 659.3 525.2 L662.1 580.8 Q662.2 582.8 662.3 580.8 L666.2 450.5 Q666.2 448.5 666.6 450.5 L669.0 465.5 Q669.3 467.5 671.3 467.8 L681.3 469.7 Q683.2 470.0 685.2 470.2 L699.0 471.1 Q701.0 471.3 701.0 473.3 L703.4 523.8 Q703.5 525.8 705.5 525.8 L724.3 525.8 Q726.3 525.8 726.7 523.8 L729.7 508.7 Q730.1 506.8 732.1 506.5 L737.0 505.8 Q739.0 505.5 739.2 507.5 L741.2 523.8 Q741.5 525.8 741.6 527.7 L745.2 583.3 Q745.3 585.3 745.4 583.3 L749.0 507.5 Q749.1 505.5 749.4 507.5 L752.5 525.0 Q752.9 527.0 754.9 527.2 L767.4 528.1 Q769.4 528.3 771.4 528.4 L776.3 528.7 Q778.3 528.8 780.3 528.9 L786.4 529.1 Q787.6 529.2 788.4 528.2 L788.4 528.2 Q789.1 527.1 789.1 528.4 L791.7 589.4 Q791.8 591.4 791.9 589.4 L796.8 512.5 Q797.0 510.5 797.4 512.5 L800.7 528.3 Q801.1 530.2 803.1 530.3 L819.9 531.2 Q821.9 531.3 823.8 530.9 L832.3 529.5 Q834.3 529.2 836.3 529.4 L853.1 531.1 Q855.1 531.3 855.8 529.4 L856.4 527.9 Q857.1 526.1 857.3 528.1 L861.5 587.4 Q861.7 589.4 861.8 587.4 L864.9 506.3 Q865.0 504.3 865.3 506.3 L868.2 525.1 Q868.5 527.1 870.4 526.3 L874.0 524.8 Q875.8 524.0 877.7 524.4 L883.2 525.7 Q885.1 526.1 885.3 528.1 L889.2 588.8 Q889.3 590.4 890.8 590.4 L890.8 590.4 Q892.4 590.4 892.4 588.8 L894.4 512.2 Q894.5 510.5 896.0 511.0 L896.0 511.0 Q897.6 511.6 897.8 513.2 L901.4 536.6 Q901.7 538.5 903.7 538.7 L911.1 539.4 Q913.1 539.6 914.8 540.7 L917.7 542.6 Q919.4 543.7 921.2 542.9 L924.8 541.4 Q926.6 540.6 926.7 542.6 L929.6 599.8 Q929.7 601.8 931.6 602.5 L938.2 605.2 Q940.1 606.0 941.3 604.4 L942.0 603.4 Q943.2 601.8 943.3 599.8 L946.7 483.5 Q946.7 481.5 946.8 479.5 L947.3 455.0 Q947.3 453.0 947.4 451.0 L948.5 424.5 Q948.6 422.5 948.9 424.5 L952.1 448.4 Q952.4 450.4 954.4 450.9 L960.6 452.5 Q962.5 453.0 964.2 454.1 L971.7 459.6 Q973.3 460.7 974.7 459.3 L976.0 458.0 Q977.4 456.6 979.4 457.2 L992.1 461.2 Q994.0 461.8 996.0 461.6 L1004.5 460.9 Q1006.5 460.7 1008.5 460.9 L1016.9 461.6 Q1018.9 461.8 1020.8 462.5 L1027.4 465.2 Q1029.3 465.9 1031.3 465.6 L1046.0 463.1 Q1048.0 462.8 1048.4 460.9 L1049.7 454.4 Q1050.0 452.4 1050.9 454.2 L1052.3 456.9 Q1053.2 458.7 1055.1 459.2 L1062.6 461.3 Q1064.6 461.8 1066.6 462.0 L1079.2 463.6 Q1081.2 463.9 1083.0 464.6 L1087.6 466.3 Q1089.5 467.0 1089.5 465.0 L1090.4 434.7 Q1090.5 432.7 1090.6 434.7 L1094.6 518.9 Q1094.6 520.9 1096.3 522.1 L1100.3 524.9 Q1101.9 526.1 1102.0 528.1 L1103.7 551.0 Q1103.8 553.0 1103.9 551.0 L1110.0 446.1 Q1110.1 444.1 1110.2 446.1 L1113.8 510.5 Q1113.9 512.5 1115.7 511.5 L1121.1 508.4 Q1122.8 507.4 1124.8 507.8 L1133.7 509.6 Q1135.5 510.0 1136.7 508.7 L1136.7 508.7 Q1138.0 507.4 1139.1 508.8 L1141.8 512.2 Q1143.1 513.8 1143.2 515.8 L1145.5 549.8 Q1145.6 551.8 1145.7 549.8 L1150.6 434.7 Q1150.7 432.7 1151.1 434.6 L1154.1 449.7 Q1154.5 451.7 1156.4 452.1 L1163.9 453.8 Q1165.9 454.2 1167.7 455.1 L1174.2 458.4 Q1176.0 459.3 1178.0 459.5 L1184.2 460.3 Q1186.1 460.6 1187.9 459.7 L1194.5 456.4 Q1196.3 455.5 1197.9 454.4 L1198.4 454.1 Q1200.1 453.0 1200.2 451.0 L1203.7 405.5 Q1203.9 403.5 1204.0 405.5 L1207.6 494.0 Q1207.7 496.0 1208.2 497.9 L1210.9 506.8 Q1211.5 508.7 1213.4 509.1 L1222.2 510.8 Q1224.1 511.2 1225.0 513.0 L1225.8 514.5 Q1226.7 516.3 1228.7 516.3 L1229.7 516.3 Q1231.7 516.3 1232.1 518.3 L1236.5 546.0 Q1236.8 548.0 1236.9 546.0 L1240.5 437.2 Q1240.6 435.2 1240.7 437.2 L1245.5 511.8 Q1245.7 513.8 1245.9 515.7 L1249.3 552.3 Q1249.5 554.3 1249.6 552.3 L1255.0 401.7 Q1255.1 399.7 1255.1 401.7 L1258.3 532.0 Q1258.3 534.0 1258.5 532.0 L1265.8 435.9 Q1265.9 433.9 1266.3 435.9 L1270.7 463.6 Q1271.0 465.6 1272.5 464.3 L1279.6 458.1 Q1281.1 456.8 1281.9 458.6 L1284.2 463.8 Q1284.9 465.6 1286.9 465.7 L1326.0 468.0 Q1328.0 468.2 1329.7 469.3 L1334.0 472.1 Q1335.6 473.2 1336.0 471.3 L1337.8 462.5 Q1338.2 460.6 1340.1 460.9 L1351.4 462.8 Q1353.4 463.1 1355.3 462.7 L1364.1 460.9 Q1366.0 460.6 1368.0 460.9 L1376.7 462.7 Q1378.7 463.1 1380.6 462.5 L1389.4 459.9 Q1391.4 459.3 1393.3 459.7 L1414.7 464.0 Q1416.7 464.4 1418.6 463.9 L1438.0 459.7 Q1440.0 459.3 1442.0 459.1 L1467.4 456.5 Q1469.4 456.3 1471.4 456.6 L1479.4 457.6 Q1481.3 457.8 1481.9 459.7 L1483.8 466.3 Q1484.3 468.3 1485.9 469.5 L1494.6 476.0 Q1496.2 477.2 1496.5 479.2 L1499.0 499.1 Q1499.2 501.0 1499.3 499.0 L1504.5 404.7 Q1504.6 402.7 1504.9 404.7 L1510.8 442.4 Q1511.1 444.4 1511.3 446.4 L1515.5 500.5 Q1515.6 502.5 1517.5 503.1 L1524.1 505.0 Q1526.1 505.5 1526.2 503.5 L1528.9 455.3 Q1529.0 453.4 1529.3 451.4 L1533.3 419.6 Q1533.5 417.6 1533.8 419.6 L1536.2 433.5 Q1536.5 435.5 1536.9 433.5 L1539.0 424.0 Q1539.5 422.1 1539.8 424.0 L1542.1 436.5 Q1542.4 438.5 1542.8 436.5 L1545.0 425.5 Q1545.4 423.5 1545.8 425.5 L1551.0 451.4 Q1551.4 453.4 1551.5 455.4 L1558.1 573.6 Q1558.2 575.6 1558.3 573.6 L1563.2 477.7 Q1563.3 475.7 1563.4 477.7 L1567.6 537.8 Q1567.8 539.8 1569.8 539.8 L1571.7 539.8 Q1573.7 539.8 1573.8 537.8 L1576.7 440.4 Q1576.7 438.5 1578.7 438.4 L1607.5 437.1 Q1609.5 437.0 1609.6 439.0 L1615.4 552.7 Q1615.5 554.7 1617.5 554.7 L1619.9 554.7" fill="none" stroke="#dc2036" stroke-width="1.5" stroke-linejoin="round"/>
</svg>
<div class="b" style="left:32.50px;top:732.00px;width:1603.50px;height:79.50px;background:#b8bec9;border-radius:6px 6px 0 0"></div>
<div class="t" style="left:47.0px;top:742.88px;font-size:24px;color:#454545;font-weight:bold;">Ladepunkt</div>
<div class="t" style="left:444.0px;top:742.88px;font-size:24px;color:#454545;font-weight:bold;">Lademodus</div>
<div class="t" style="left:444.0px;top:778.88px;font-size:24px;color:#454545;font-weight:bold;">Fahrzeug</div>
<div class="t" style="left:841.0px;top:742.88px;font-size:24px;color:#454545;font-weight:bold;">Parameter</div>
<div class="t" style="left:841.0px;top:778.88px;font-size:24px;color:#454545;font-weight:bold;">SoC</div>
<div class="t" style="left:1238.5px;top:742.88px;font-size:24px;color:#454545;font-weight:bold;">geladen</div>
<div class="b" style="left:32.00px;top:812.50px;width:1605.50px;height:81.00px;background:#d1d6e3;border:1.8px solid #222;border-bottom:1px solid #b9bdc6;box-sizing:border-box"></div>
<div class="t" style="left:47.0px;top:825.18px;font-size:24px;color:#454545;font-weight:bold;">Interne openWB</div>
<svg class="b" style="left:238.00px;top:826.50px;" width="15" height="19" viewBox="0 0 15 19"><rect x="3.2" y="0.7" width="2.2" height="6" rx="1" fill="#143f14"/><rect x="9.9" y="0.7" width="2.2" height="6" rx="1" fill="#143f14"/><path d="M1.1 6.7 H14.2 V8.5 H13.4 Q13.1 13.6 8.7 15.2 V17.9 H6.5 V15.2 Q2.1 13.6 1.9 8.5 H1.1 Z" fill="#1d6a1d" stroke="#0c2a0c" stroke-width="0.8" stroke-linejoin="round"/></svg>
<div class="t" style="left:444.0px;top:825.18px;font-size:24px;color:#454545;font-weight:normal;">PV</div>
<div class="t" style="left:444.0px;top:861.18px;font-size:24px;color:#454545;font-weight:normal;">Kona</div>
<div class="t" style="left:841.0px;top:825.18px;font-size:24px;color:#454545;font-weight:normal;letter-spacing:-0.3px">2,51 kW</div>
<svg class="b" style="left:934.50px;top:827.50px;" width="18" height="18" viewBox="0 0 18 18"><circle cx="9" cy="9" r="7.9" fill="none" stroke="#454545" stroke-width="1.5"/><text x="9" y="13.6" text-anchor="middle" font-size="12.5" fill="#454545" font-family="Liberation Sans">3</text></svg>
<div class="t" style="left:960.5px;top:825.18px;font-size:24px;color:#454545;font-weight:normal;">27 A</div>
<div class="t" style="left:1238.5px;top:825.18px;font-size:24px;color:#454545;font-weight:normal;">4,2 kWh / 24,5 km</div>
<svg class="b" style="left:1600.70px;top:824.50px;" width="21" height="21" viewBox="0 0 21 21"><rect x="0" y="0" width="21" height="21" rx="3.5" fill="#454545"/><rect x="5.3" y="9.4" width="10.4" height="2.3" fill="#fff"/></svg>
<div class="b" style="left:32.00px;top:893.00px;width:1.40px;height:449.00px;background:#333"></div>
<div class="b" style="left:1635.60px;top:893.00px;width:1.40px;height:449.00px;background:#333"></div>
<div class="b" style="left:40.10px;top:902.00px;width:1587.90px;height:73.50px;background:#d2e9ef;border:1px solid #c9e4ea;box-sizing:border-box;border-radius:6px"></div>
<svg class="b" style="left:78.50px;top:928.00px;" width="24.5" height="24.5" viewBox="0 0 24.5 24.5"><circle cx="12.25" cy="12.25" r="12.1" fill="#0e5561"/><circle cx="12.3" cy="6.8" r="1.9" fill="#d2e9ef"/><path d="M9 10.2 H13.6 V16.2 H15.3 V18.4 H9.2 V16.2 H11 V12.4 H9 Z" fill="#d2e9ef"/></svg>
<div class="t" style="left:109.8px;top:929.39px;font-size:23.4px;color:#0e5561;font-weight:normal;">Fahrzeug lädt.</div>
<svg class="b" style="left:47.00px;top:989.00px;" width="22" height="24" viewBox="0 0 22 24"><path d="M5.5 10 V7 Q5.5 1.5 11 1.5 Q16.5 1.5 16.5 7 V10" fill="none" stroke="#454545" stroke-width="3"/><rect x="0.8" y="9.5" width="20.4" height="13.5" rx="2.2" fill="#454545"/></svg>
<div class="t" style="left:74.5px;top:989.68px;font-size:24px;color:#454545;font-weight:normal;">Ladepunkt sperren</div>
<div class="b" style="left:576.80px;top:982.10px;width:1043.70px;height:45.60px;background:#43a34b;border-radius:6px"></div><div class="b" style="left:577.60px;top:982.90px;width:13.60px;height:44.00px;background:#fff;border-radius:5px;border:1px solid #43a34b;box-sizing:border-box"></div>
<div class="t" style="left:1083.5px;top:995.32px;font-size:21px;color:#fff;font-weight:normal;width:44px;text-align:center">Nein</div>
<div class="b" style="left:47.80px;top:1051.80px;width:1573.20px;height:1.10px;background:#e3e3e3"></div>
<svg class="b" style="left:47.00px;top:1095.00px;" width="31" height="24" viewBox="0 0 31 24"><path d="M2.5 8.2 H5 L7.6 3.2 Q8.3 2 9.8 2 H18 Q19.4 2 20.3 3 L25.5 8.2 H27.5 Q30.7 8.2 30.7 11.4 V15.5 Q30.7 17.5 28.7 17.5 H2.7 Q0.7 17.5 0.7 15.5 V10.2 Q0.7 8.2 2.5 8.2 Z" fill="#454545"/><path d="M7 8.2 L9.4 4.4 H10.9 V8.2 Z M12.4 4.4 H18.2 L21.8 8.2 H12.4 Z" fill="#fff"/><circle cx="8.2" cy="17.6" r="4.2" fill="#454545"/><circle cx="22.8" cy="17.6" r="4.2" fill="#454545"/><circle cx="8.2" cy="17.6" r="1.9" fill="#fff"/><circle cx="22.8" cy="17.6" r="1.9" fill="#fff"/></svg>
<div class="t" style="left:83.3px;top:1096.48px;font-size:24px;color:#454545;font-weight:normal;">Fahrzeug</div>
<div class="b" style="left:577.20px;top:1077.10px;width:1043.30px;height:45.50px;border:1px solid #cfcfcf;border-radius:6px;background:#fff;box-sizing:border-box"></div>
<div class="t" style="left:602.5px;top:1093.53px;font-size:15.8px;color:#212529;font-weight:normal;">Kona</div>
<svg class="b" style="left:1600.00px;top:1094.00px;" width="15" height="12" viewBox="0 0 15 12"><path d="M1.5 3 L7.5 9 L13.5 3" fill="none" stroke="#222" stroke-width="2.2" stroke-linecap="round" stroke-linejoin="round"/></svg>
<div class="t" style="left:47.0px;top:1158.38px;font-size:24px;color:#454545;font-weight:normal;">Lademodus</div>
<div class="b" style="left:577.40px;top:1140.10px;width:1043.10px;height:56.20px;border:1px solid #444;border-radius:6px;box-sizing:border-box"></div>
<div class="b" style="left:577.40px;top:1140.10px;width:230.60px;height:56.20px;border:1px solid #c8233f;border-right:none;border-radius:6px 0 0 6px;background:#fff;box-sizing:border-box"></div>
<div class="b" style="left:807.10px;top:1140.10px;width:194.80px;height:56.20px;background:#43a34b"></div>
<div class="b" style="left:1001.90px;top:1140.10px;width:203.10px;height:56.20px;border:1px solid #3a78d8;border-right:1px solid #777;background:#fff;box-sizing:border-box"></div>
<div class="b" style="left:1204.00px;top:1140.10px;width:203.50px;height:56.20px;border-top:1px solid #6c757d;border-bottom:1px solid #6c757d;border-left:1px solid #6c757d;background:#fff;box-sizing:border-box"></div>
<div class="b" style="left:1406.20px;top:1140.10px;width:214.30px;height:56.20px;border:1px solid #343a40;border-left:1.3px solid #343a40;border-radius:0 6px 6px 0;background:#fff;box-sizing:border-box"></div>
<div class="t" style="left:592.3px;top:1157.48px;font-size:24px;color:#c8233f;font-weight:normal;width:200px;text-align:center">Sofort</div>
<div class="t" style="left:804.5px;top:1157.48px;font-size:24px;color:#fff;font-weight:normal;width:200px;text-align:center">PV</div>
<div class="t" style="left:1003.2px;top:1157.48px;font-size:24px;color:#2f73d6;font-weight:normal;width:200px;text-align:center">Ziel</div>
<div class="t" style="left:1205.5px;top:1157.48px;font-size:24px;color:#5d666e;font-weight:normal;width:200px;text-align:center">Eco</div>
<div class="t" style="left:1413.5px;top:1157.48px;font-size:24px;color:#222;font-weight:normal;width:200px;text-align:center">Stop</div>
<svg class="b" style="left:47.50px;top:1209.00px;" width="27" height="26" viewBox="0 0 27 26"><path d="M13.5 1 L17.2 8.6 L25.6 9.8 L19.5 15.7 L21 24 L13.5 20.1 L6 24 L7.5 15.7 L1.4 9.8 L9.8 8.6 Z" fill="#454545" stroke="#454545" stroke-width="1.2" stroke-linejoin="round"/></svg>
<div class="t" style="left:80.5px;top:1210.98px;font-size:24px;color:#454545;font-weight:normal;">Priorität</div>
<div class="b" style="left:576.80px;top:1203.00px;width:1043.70px;height:46.70px;background:#43a34b;border-radius:6px"></div><div class="b" style="left:1606.10px;top:1203.80px;width:13.60px;height:45.10px;background:#fff;border-radius:5px;border:1px solid #43a34b;box-sizing:border-box"></div>
<div class="t" style="left:992.5px;top:1214.22px;font-size:21px;color:#fff;font-weight:normal;width:200px;text-align:center">Ja</div>
<svg class="b" style="left:46.50px;top:1262.50px;" width="25" height="25" viewBox="0 0 25 25"><circle cx="12.5" cy="12.5" r="11" fill="none" stroke="#454545" stroke-width="2.6"/><path d="M12.5 6 V13 L17 16.5" fill="none" stroke="#454545" stroke-width="2.6" stroke-linecap="round"/></svg>
<div class="t" style="left:77.0px;top:1264.28px;font-size:24px;color:#454545;font-weight:normal;">Zeitladen</div>
<div class="b" style="left:576.80px;top:1256.40px;width:1043.70px;height:45.10px;background:#d33548;border-radius:6px"></div><div class="b" style="left:577.60px;top:1257.20px;width:13.60px;height:43.50px;background:#fff;border-radius:5px;border:1px solid #d33548;box-sizing:border-box"></div>
<div class="t" style="left:1083.5px;top:1269.22px;font-size:21px;color:#fff;font-weight:normal;width:44px;text-align:center">Nein</div>
<div class="b" style="left:47.80px;top:1326.30px;width:1573.20px;height:1.10px;background:#e3e3e3"></div>
</body></html>
